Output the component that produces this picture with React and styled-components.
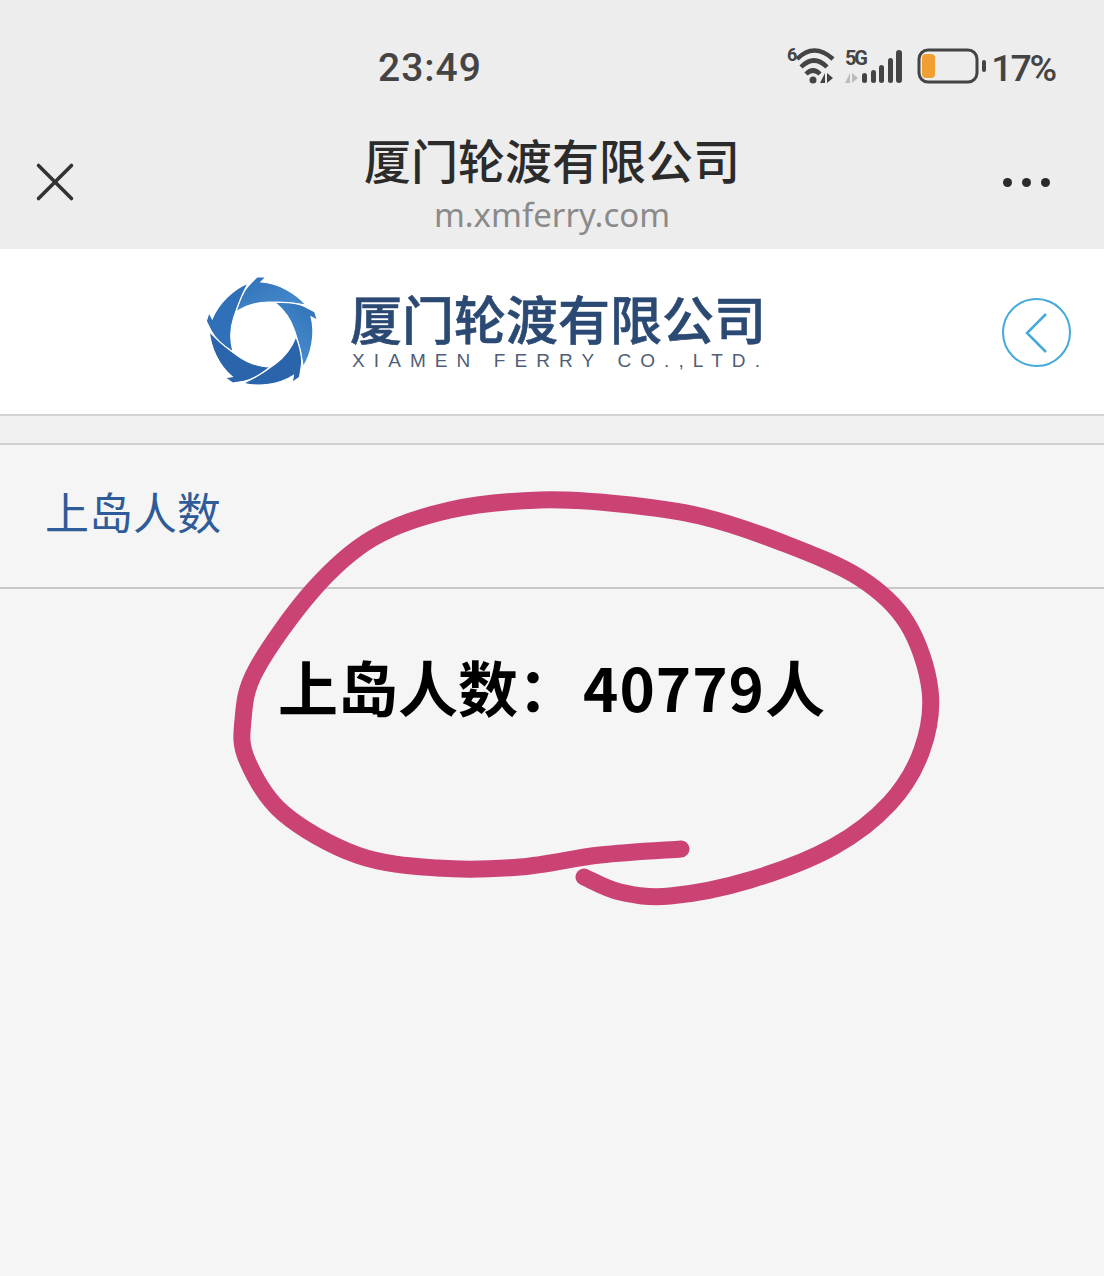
import React from "react";
import styled, { createGlobalStyle } from "styled-components";
import { X } from "lucide-react";

const CJK = `"Noto Sans CJK SC", "Noto Sans", sans-serif`;

const GlobalStyle = createGlobalStyle`
  html, body {
    margin: 0;
    padding: 0;
    background: #f5f5f5;
  }
  * {
    box-sizing: border-box;
  }
`;

const Page = styled.div`
  position: relative;
  width: 1104px;
  height: 1276px;
  overflow: hidden;
  background: #f5f5f5;
  font-family: ${CJK};
`;

// Grey phone + browser chrome
const Chrome = styled.header`
  height: 249px;
  background: #ededed;
  display: flex;
  flex-direction: column;
`;

const StatusBar = styled.div`
  height: 124px;
  padding: 44px 49px 0 378px;
  display: flex;
  justify-content: space-between;
  align-items: flex-start;
`;

const Clock = styled.span`
  font-family: "Roboto", sans-serif;
  font-size: 39px;
  font-weight: 500;
  line-height: 48px;
  letter-spacing: 1px;
  color: #444;
`;

const StatusIcons = styled.div`
  display: flex;
  align-items: center;
  margin-top: 1px;
  height: 44px;
`;

const Percent = styled.span`
  font-family: "Roboto", sans-serif;
  font-size: 37.5px;
  font-weight: 500;
  line-height: 44px;
  letter-spacing: -2.2px;
  color: #444;
  margin-left: 3px;
  margin-top: 2px;
`;

const TitleBar = styled.div`
  display: grid;
  grid-template-columns: 110px 1fr 110px;
  align-items: center;
  padding-top: 5px;
`;

const CloseButton = styled.div`
  display: flex;
  padding-left: 22px;
  color: #333;
`;

const TitleBlock = styled.div`
  display: flex;
  flex-direction: column;
  align-items: center;
`;

const Title = styled.div`
  font-size: 47px;
  font-weight: 500;
  line-height: 60px;
  color: #2b2b2b;
`;

const Domain = styled.div`
  font-family: "Noto Sans", sans-serif;
  font-size: 33px;
  line-height: 40px;
  margin-top: 6px;
  color: #8a8a8a;
`;

const MoreDots = styled.div`
  display: flex;
  gap: 10px;
  padding-left: 9px;
`;

const Dot = styled.i`
  width: 9px;
  height: 9px;
  border-radius: 50%;
  background: #2b2b2b;
`;

// White logo band
const LogoBand = styled.div`
  height: 167px;
  background: #fff;
  border-bottom: 2px solid #d2d2d2;
  display: flex;
  align-items: center;
  padding: 0 33px 0 206px;
`;

const LogoMark = styled.svg`
  flex: none;
  margin-top: 5px;
  overflow: visible;
`;

const LogoText = styled.div`
  display: flex;
  flex-direction: column;
  margin-left: 30px;
  margin-bottom: 3px;
`;

const LogoName = styled.div`
  font-size: 52px;
  line-height: 56px;
  font-weight: 500;
  color: #2b4a73;
  -webkit-text-stroke: 0.6px #2b4a73;
  white-space: nowrap;
`;

const LogoEnglish = styled.div`
  font-family: "Liberation Sans", sans-serif;
  font-size: 19px;
  line-height: 20px;
  letter-spacing: 9.1px;
  color: #4f5e76;
  white-space: nowrap;
  margin-left: 2px;
  margin-top: 5px;
`;

const BackCircle = styled.div`
  margin-left: auto;
  width: 69px;
  height: 69px;
  margin-top: 2px;
  border: 2.5px solid #45a9d9;
  border-radius: 50%;
  display: flex;
  align-items: center;
  justify-content: center;
`;

const Spacer = styled.div`
  height: 29px;
  background: #f1f1f1;
  border-bottom: 2px solid #d2d2d2;
`;

const SectionRow = styled.div`
  height: 144px;
  border-bottom: 2px solid #c8c8c8;
  padding: 35px 0 0 45px;
`;

const SectionLabel = styled.div`
  font-size: 44px;
  line-height: 62px;
  color: #2f5b98;
`;

const Count = styled.div`
  padding: 58px 0 0 278px;
  font-size: 60px;
  line-height: 78px;
  font-weight: 700;
  color: #000;
  white-space: nowrap;
`;

const Digits = styled.span`
  letter-spacing: 1px;
  margin-left: 5px;
`;

const Scribble = styled.svg`
  position: absolute;
  left: 0;
  top: 0;
  pointer-events: none;
`;

const WifiIcon = () => (
  <svg width="50" height="44" viewBox="0 0 50 44">
    <text x="0" y="16" fontFamily="Roboto, sans-serif" fontSize="18" fontWeight="700" fill="#444">6</text>
    <g fill="none" stroke="#444" strokeWidth="4.5">
      <path d="M10 14 Q27 -3 46 14" />
      <path d="M14 22 Q27 9 40 22" />
      <path d="M19 29 Q26 22 33 29" />
    </g>
    <circle cx="26" cy="35" r="3.5" fill="#444" />
    <path d="M38 28 v10 h-5 z M40 28 v10 l6 -5 z" fill="#444" />
  </svg>
);

const SignalIcon = () => (
  <svg width="58" height="44" viewBox="0 0 58 44" style={{ marginLeft: 8 }}>
    <text x="0" y="20" fontFamily="Roboto, sans-serif" fontSize="20" fontWeight="700" fill="#444" textLength="23">5G</text>
    <path d="M5 28 v10 h-5 z M7 28 v10 l6 -5 z" fill="#bcbcbc" />
    <g fill="#444">
      <rect x="17" y="28" width="5" height="10" rx="2.5" />
      <rect x="26" y="25" width="5" height="13" rx="2.5" />
      <rect x="34" y="20" width="5" height="18" rx="2.5" />
      <rect x="43" y="13" width="5" height="25" rx="2.5" />
      <rect x="51" y="5" width="6" height="33" rx="3" />
    </g>
  </svg>
);

const BatteryIcon = () => (
  <svg width="71" height="44" viewBox="0 0 71 44" style={{ marginLeft: 14 }}>
    <rect x="2" y="5" width="58" height="32" rx="9" fill="none" stroke="#444" strokeWidth="3" />
    <rect x="5" y="9" width="13" height="24" rx="4" fill="#f0a033" />
    <rect x="65" y="15" width="4" height="12" rx="2" fill="#444" />
  </svg>
);

// The five blades of the ferry logo
const bladePath =
  "M30 35 C33 24 37 14 43 8 L51 0 L60 0 L55 5 C72 6 90 16 100 28 C84 25 74 25 63 25 C50 25 39 29 30 35 Z";

const bladeFills = {
  0: "url(#blade)",
  72: "url(#blade)",
  144: "#2a64ab",
  216: "#2a64ab",
  288: "#2f70b8",
};

const FerryLogo = () => (
  <LogoMark width="114" height="114" viewBox="0 0 114 114">
    <defs>
      <linearGradient id="blade" x1="0" y1="0" x2="1" y2="1">
        <stop offset="0" stopColor="#2f6fb5" />
        <stop offset="1" stopColor="#4a90d2" />
      </linearGradient>
    </defs>
    {[0, 72, 144, 216, 288].map((deg) => (
      <path
        key={deg}
        d={bladePath}
        fill={bladeFills[deg]}
        stroke="#fff"
        strokeWidth="1.2"
        transform={`rotate(${deg} 56 57)`}
      />
    ))}
  </LogoMark>
);

// pen stroke, read off the picture point by point
const penPoints = [
  [681, 849], [600, 855], [520, 867], [437, 868], [357, 855], [283, 813],
  [247, 760], [243, 720], [256, 670], [313, 590], [373, 538], [450, 510],
  [540, 500], [620, 504], [700, 516], [783, 543], [860, 578], [907, 623],
  [930, 690], [922, 750], [890, 803], [833, 847], [750, 880], [670, 896],
  [620, 892], [584, 877],
];

const smoothPath = (pts) => {
  let d = `M${pts[0][0]} ${pts[0][1]}`;
  for (let i = 0; i < pts.length - 1; i++) {
    const p0 = pts[i - 1] || pts[i];
    const p1 = pts[i];
    const p2 = pts[i + 1];
    const p3 = pts[i + 2] || p2;
    const c1x = p1[0] + (p2[0] - p0[0]) / 6;
    const c1y = p1[1] + (p2[1] - p0[1]) / 6;
    const c2x = p2[0] - (p3[0] - p1[0]) / 6;
    const c2y = p2[1] - (p3[1] - p1[1]) / 6;
    d += ` C${c1x} ${c1y} ${c2x} ${c2y} ${p2[0]} ${p2[1]}`;
  }
  return d;
};

const App = () => (
  <Page>
    <GlobalStyle />
    <Chrome>
      <StatusBar>
        <Clock>23:49</Clock>
        <StatusIcons>
          <WifiIcon />
          <SignalIcon />
          <BatteryIcon />
          <Percent>17%</Percent>
        </StatusIcons>
      </StatusBar>
      <TitleBar>
        <CloseButton>
          <X size={66} strokeWidth={1.3} />
        </CloseButton>
        <TitleBlock>
          <Title>厦门轮渡有限公司</Title>
          <Domain>m.xmferry.com</Domain>
        </TitleBlock>
        <MoreDots>
          <Dot />
          <Dot />
          <Dot />
        </MoreDots>
      </TitleBar>
    </Chrome>

    <LogoBand>
      <FerryLogo />
      <LogoText>
        <LogoName>厦门轮渡有限公司</LogoName>
        <LogoEnglish>XIAMEN FERRY CO.,LTD.</LogoEnglish>
      </LogoText>
      <BackCircle>
        <svg width="30" height="44" viewBox="0 0 30 44">
          <path d="M24 3 L5 22 L24 41" fill="none" stroke="#45a9d9" strokeWidth="2.5" />
        </svg>
      </BackCircle>
    </LogoBand>
    <Spacer />
    <SectionRow>
      <SectionLabel>上岛人数</SectionLabel>
    </SectionRow>
    <Count>
      上岛人数：<Digits>40779</Digits>人
    </Count>

    {/* hand drawn circle on top of the screenshot */}
    <Scribble width="1104" height="1276" viewBox="0 0 1104 1276">
      <path
        d={smoothPath(penPoints)}
        fill="none"
        stroke="#cb4275"
        strokeWidth="17"
        strokeLinecap="round"
        strokeLinejoin="round"
      />
    </Scribble>
  </Page>
);

export default App;
